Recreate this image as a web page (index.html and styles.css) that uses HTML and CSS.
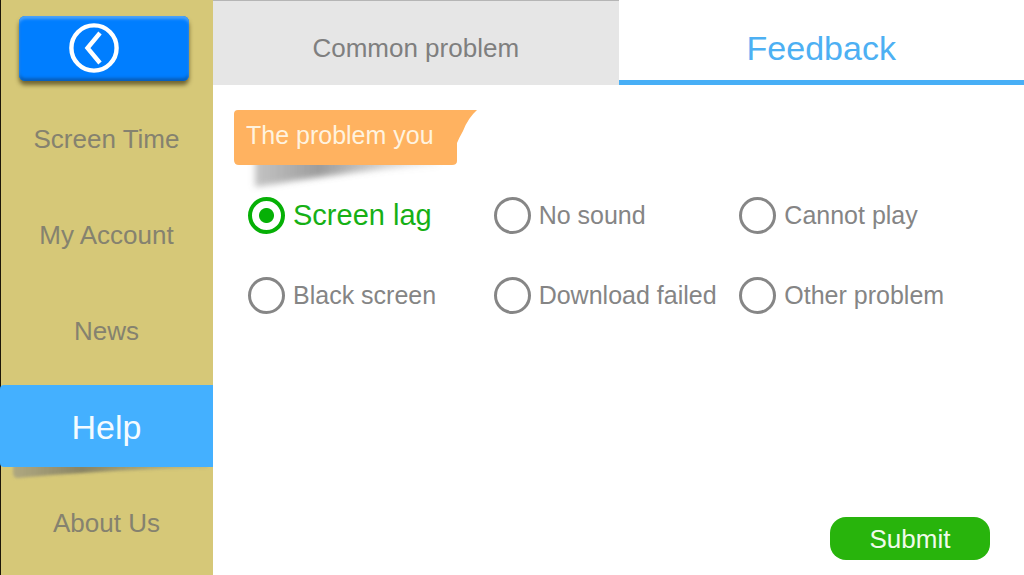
FILE: index.html
```html
<!DOCTYPE html>
<html lang="en">
<head>
<meta charset="utf-8">
<title>Feedback</title>
<link rel="stylesheet" href="styles.css">
</head>
<body>
<div class="app">
  <aside class="sidebar">
    <button class="back" type="button" aria-label="Back">
      <svg class="back-icon" viewBox="0 0 50 50" aria-hidden="true">
        <circle cx="25" cy="25" r="22.6" fill="none" stroke="#fff" stroke-width="4.4"/>
        <path d="M31 10 L18.5 25 L31 40" fill="none" stroke="#fff" stroke-width="4.4"/>
      </svg>
    </button>
    <nav class="menu">
      <a class="menu-item" href="#time">Screen Time</a>
      <a class="menu-item" href="#account">My Account</a>
      <a class="menu-item" href="#news">News</a>
      <a class="menu-item active" href="#help" aria-current="page">Help
        <svg class="menu-shadow" viewBox="0 0 213 18" preserveAspectRatio="none" aria-hidden="true">
          <defs>
            <linearGradient id="menuShade" x1="0" x2="1" y1="0" y2="0">
              <stop offset="0" stop-color="#888" stop-opacity=".5"/>
              <stop offset=".35" stop-color="#555" stop-opacity=".6"/>
              <stop offset="1" stop-color="#777" stop-opacity=".15"/>
            </linearGradient>
            <filter id="menuBlur" x="-5%" y="-30%" width="110%" height="160%"><feGaussianBlur stdDeviation="1.5"/></filter>
          </defs>
          <path d="M13 -4 H208 V1 C140 2 70 6 18 11 Q13 11 13 6Z" fill="url(#menuShade)" filter="url(#menuBlur)"/>
        </svg>
      </a>
      <a class="menu-item" href="#about">About Us</a>
    </nav>
  </aside>
  <main class="main">
    <div class="tabs">
      <button class="tab" type="button">Common problem</button>
      <button class="tab selected" type="button">Feedback</button>
    </div>
    <form class="form">
      <h2 class="ribbon">
        <svg class="ribbon-art" viewBox="0 0 250 84" aria-hidden="true">
          <defs>
            <linearGradient id="ribbonShade" x1="0" x2="1" y1="0" y2="0">
              <stop offset="0" stop-color="#888" stop-opacity=".5"/>
              <stop offset=".35" stop-color="#666" stop-opacity=".65"/>
              <stop offset="1" stop-color="#888" stop-opacity=".1"/>
            </linearGradient>
            <filter id="ribbonBlur" x="-10%" y="-30%" width="120%" height="160%"><feGaussianBlur stdDeviation="3"/></filter>
          </defs>
          <path d="M22 48 H205 V56 C140 59 75 70 22 78Z" fill="url(#ribbonShade)" filter="url(#ribbonBlur)"/>
          <path d="M5 1 H244 Q235 9 230 22 Q226 29 224 34 V52 Q224 56 219 56 H6 Q1 56 1 51 V5 Q1 1 5 1Z" fill="#ffb260"/>
        </svg>
        <span class="ribbon-text">The problem you</span>
      </h2>
      <div class="options" role="radiogroup" aria-label="The problem you">
        <label class="option"><input class="radio" type="radio" name="problem" checked><span class="option-text">Screen lag</span></label>
        <label class="option"><input class="radio" type="radio" name="problem"><span class="option-text">No sound</span></label>
        <label class="option"><input class="radio" type="radio" name="problem"><span class="option-text">Cannot play</span></label>
        <label class="option"><input class="radio" type="radio" name="problem"><span class="option-text">Black screen</span></label>
        <label class="option"><input class="radio" type="radio" name="problem"><span class="option-text">Download failed</span></label>
        <label class="option"><input class="radio" type="radio" name="problem"><span class="option-text">Other problem</span></label>
      </div>
      <button class="submit" type="submit">Submit</button>
    </form>
  </main>
</div>
</body>
</html>
```
FILE: styles.css
```css
* {
  box-sizing: border-box;
}

body {
  margin: 0;
  background: #fff;
  color: #858585;
  font-family: "Liberation Sans", Arial, sans-serif;
  font-size: 26px;
}

button {
  border: 0;
  padding: 0;
  font: inherit;
  cursor: pointer;
}

.app {
  display: flex;
  min-height: 100vh;
}

.sidebar {
  flex: 0 0 213px;
  background: linear-gradient(90deg, #1c1608 1px, #d6c878 1px);
}

.back {
  display: flex;
  align-items: center;
  width: 170px;
  height: 65px;
  margin: 16px 0 16px 19px;
  padding: 0 0 1px 50px;
  border-radius: 6px;
  background: #007eff;
  box-shadow: inset 0 3px 3px #4ba3fa, inset 0 -3px 3px #0860bd, 0 4px 4px rgba(70, 60, 20, 0.7);
}

.back-icon {
  width: 50px;
  height: 50px;
}

.menu {
  display: flex;
  flex-direction: column;
  gap: 14px;
}

.menu-item {
  position: relative;
  display: flex;
  align-items: center;
  justify-content: center;
  height: 82px;
  padding-top: 2px;
  color: #85826f;
  text-decoration: none;
}

.menu-item.active {
  border-radius: 4px 0 0 4px;
  background: #44b0ff;
  color: #f4fbff;
  font-size: 34px;
}

.menu-shadow {
  position: absolute;
  top: 100%;
  left: 0;
  width: 100%;
  height: 18px;
}

.main {
  display: flex;
  flex: 1;
  flex-direction: column;
  min-width: 0;
}

.tabs {
  display: grid;
  grid-template-columns: 1fr 1fr;
  height: 85px;
}

.tab {
  padding-top: 10px;
  border-top: 1px solid #b5b5b5;
  background: #e6e6e6;
  color: #7f7f7f;
}

.tab.selected {
  padding-top: 16px;
  border-top: 0;
  border-bottom: 5px solid #48aff6;
  background: #fff;
  color: #4db0f3;
  font-size: 34px;
}

.form {
  display: flex;
  flex: 1;
  flex-direction: column;
  padding: 24px 34px 15px 20px;
}

.ribbon {
  position: relative;
  width: 250px;
  height: 84px;
  margin: 0;
  color: #fff3df;
  font-size: 25px;
  font-weight: 400;
}

.ribbon-art {
  position: absolute;
  inset: 0;
  width: 100%;
  height: 100%;
}

.ribbon-text {
  position: relative;
  display: block;
  padding: 0 13px;
  line-height: 52px;
}

.options {
  display: grid;
  grid-template-columns: repeat(3, 1fr);
  row-gap: 43px;
  margin: 4px 5px 0 15px;
}

.option {
  display: flex;
  align-items: center;
  gap: 8px;
  height: 37px;
  font-size: 25px;
  white-space: nowrap;
  cursor: pointer;
}

.radio {
  flex: none;
  width: 37px;
  height: 37px;
  margin: 0;
  border: 3px solid #868686;
  border-radius: 50%;
  appearance: none;
}

.radio:checked {
  border: 4px solid #06b006;
  background: radial-gradient(circle, #06b006 7px, #fff 8px);
}

.radio:checked + .option-text {
  color: #16b016;
  font-size: 29px;
}

.submit {
  width: 160px;
  height: 43px;
  margin-top: auto;
  margin-left: auto;
  padding-top: 2px;
  border-radius: 16px;
  background: #28b40c;
  color: #effbea;
}
```
